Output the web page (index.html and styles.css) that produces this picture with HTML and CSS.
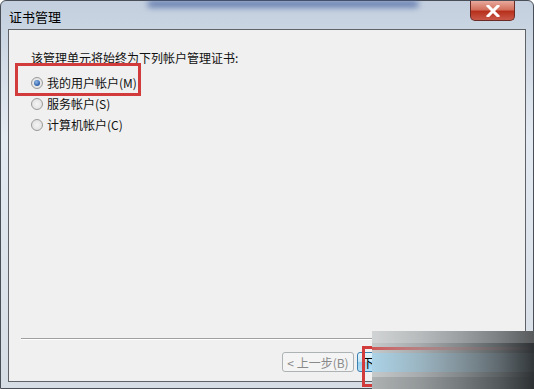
FILE: index.html
```html
<!DOCTYPE html>
<html>
  <head>
    <title>证书管理</title>
    <link rel="stylesheet" href="styles.css">
  </head>
  <body>
    <div class="window">
      <div class="title-bar">
        <span class="glass"></span>
        <span class="title">证书管理</span>
        <button class="close-btn">
          <svg width="14" height="12" viewBox="0 0 14 12">
            <path d="M2 1 L12 11 M12 1 L2 11" stroke="#fff" stroke-width="3" stroke-linecap="square"/>
          </svg>
        </button>
      </div>

      <div class="client">
        <div class="content">
          <p class="intro">该管理单元将始终为下列帐户管理证书:</p>
          <label class="option"><span class="radio checked"></span>我的用户帐户(M)</label>
          <label class="option"><span class="radio"></span>服务帐户(S)</label>
          <label class="option"><span class="radio"></span>计算机帐户(C)</label>
        </div>

        <div class="footer">
          <hr class="sep">
          <div class="buttons">
            <button class="btn">&lt; 上一步(B)</button>
            <button class="btn btn-next">下一步(N) &gt;</button>
            <button class="btn btn-cancel">取消</button>
          </div>
        </div>

        <!-- annotations drawn over the dialog -->
        <div class="mark mark-option"></div>
      </div>

      <div class="mark mark-next"></div>

      <!-- smeared corner of the screenshot -->
      <svg class="smudge" width="162" height="59" viewBox="0 0 162 59">
        <defs>
          <linearGradient id="gx" x1="0" y1="0" x2="1" y2="0">
            <stop offset="0" stop-color="#c6c9ca"/>
            <stop offset="0.3" stop-color="#a6aaac"/>
            <stop offset="0.55" stop-color="#82878a"/>
            <stop offset="0.78" stop-color="#5c6164"/>
            <stop offset="0.92" stop-color="#3f4345"/>
            <stop offset="1" stop-color="#2e3133"/>
          </linearGradient>
          <linearGradient id="gr" x1="0" y1="0" x2="1" y2="0">
            <stop offset="0" stop-color="#d13b3b" stop-opacity="0.8"/>
            <stop offset="0.5" stop-color="#c06060" stop-opacity="0.25"/>
            <stop offset="1" stop-color="#c06060" stop-opacity="0"/>
          </linearGradient>
          <linearGradient id="gb" x1="0" y1="0" x2="1" y2="0">
            <stop offset="0" stop-color="#9fd6f2" stop-opacity="0.7"/>
            <stop offset="0.5" stop-color="#7fb0c8" stop-opacity="0.3"/>
            <stop offset="1" stop-color="#6a8a9a" stop-opacity="0.05"/>
          </linearGradient>
        </defs>
        <rect x="0" y="0" width="162" height="59" fill="url(#gx)"/>
        <rect x="0" y="0" width="162" height="12" fill="#ffffff" opacity="0.2"/>
        <rect x="0" y="16" width="162" height="3" fill="url(#gr)"/>
        <rect x="0" y="22" width="162" height="19" fill="url(#gb)"/>
        <rect x="0" y="46" width="162" height="13" fill="#2a2d2f" opacity="0.15"/>
      </svg>
    </div>
  </body>
</html>
```

FILE: styles.css
```css
html, body{
  margin: 0;
  padding: 0;
}
body{
  width: 534px;
  height: 389px;
  overflow: hidden;
  font-family: "Noto Sans CJK SC", "DejaVu Sans", sans-serif;
  font-size: 12px;
  color: #111;
}
.window{
  position: relative;
  box-sizing: border-box;
  width: 534px;
  height: 389px;
  display: flex;
  flex-direction: column;
  padding: 0 7px 6px 7px;
  border: 1px solid #4a4f57;
  border-radius: 6px 6px 0 0;
  background: linear-gradient(180deg, #c3cfde 0%, #e4eaf1 35%, #d7dde5 100%);
}
.title-bar{
  position: relative;
  height: 28px;
  display: flex;
  align-items: center;
  justify-content: space-between;
}
/* dark streak of the aero glass behind the caption */
.glass{
  position: absolute;
  left: 140px;
  top: 0;
  width: 270px;
  height: 6px;
  background: #3d5a9c;
  filter: blur(3px);
  opacity: 0.8;
}
.title{
  position: relative;
  font-size: 13px;
  color: #000;
  margin-left: 1px;
  margin-top: 2px;
}
.close-btn{
  position: relative;
  width: 45px;
  height: 20px;
  align-self: flex-start;
  margin-right: 11px;
  border: 1px solid #6b2a24;
  border-top: none;
  border-radius: 0 0 5px 5px;
  background: linear-gradient(180deg, #e7a99c 0%, #d4705e 45%, #b8311c 55%, #c9584a 100%);
  display: flex;
  align-items: center;
  justify-content: center;
  padding: 0;
}
.client{
  position: relative;
  flex: 1;
  display: flex;
  flex-direction: column;
  justify-content: space-between;
  background: #f0f0f0;
  border: 1px solid #5f6368;
}
.content{
  padding: 19px 0 0 22px;
}
.intro{
  margin: 0 0 5px 0;
  line-height: 18px;
}
.option{
  display: flex;
  align-items: center;
  height: 21px;
}
.radio{
  box-sizing: border-box;
  width: 12px;
  height: 12px;
  border-radius: 50%;
  border: 1px solid #9a9a9a;
  background: radial-gradient(circle, #f4f4f4 0%, #dcdcdc 100%);
  margin-right: 4px;
  display: flex;
  align-items: center;
  justify-content: center;
}
.radio.checked::after{
  content: "";
  width: 6px;
  height: 6px;
  border-radius: 50%;
  background: radial-gradient(circle at 40% 35%, #8fb8e8 0%, #2a5ea8 70%, #1d4a8a 100%);
}
.footer{
  padding-bottom: 9px;
}
.sep{
  margin: 0 0 12px 12px;
  border: none;
  border-top: 1px solid #a0a0a0;
  border-bottom: 1px solid #fff;
}
.buttons{
  display: flex;
  justify-content: flex-end;
  gap: 3px;
  padding-right: 16px;
}
.btn{
  width: 72px;
  height: 20px;
  font-family: inherit;
  font-size: 12px;
  color: #8a8a8a;
  background: #f4f4f4;
  border: 1px solid #adb2b5;
  border-radius: 3px;
  padding: 0;
  white-space: nowrap;
}
.btn-next{
  color: #000;
  border-color: #3c7fb1;
  background: linear-gradient(180deg, #e5f4fc 0%, #c4e5f6 50%, #98d1ef 52%, #b6e0f5 100%);
}
.btn-cancel{
  margin-left: 5px;
  color: #000;
}
.mark{
  position: absolute;
  box-sizing: border-box;
  border: 3px solid #d13b3b;
}
.mark-option{
  left: 6px;
  top: 33px;
  width: 126px;
  height: 33px;
}
.mark-next{
  left: 361px;
  top: 345px;
  width: 80px;
  height: 41px;
}
.smudge{
  position: absolute;
  left: 371px;
  top: 330px;
}
```
